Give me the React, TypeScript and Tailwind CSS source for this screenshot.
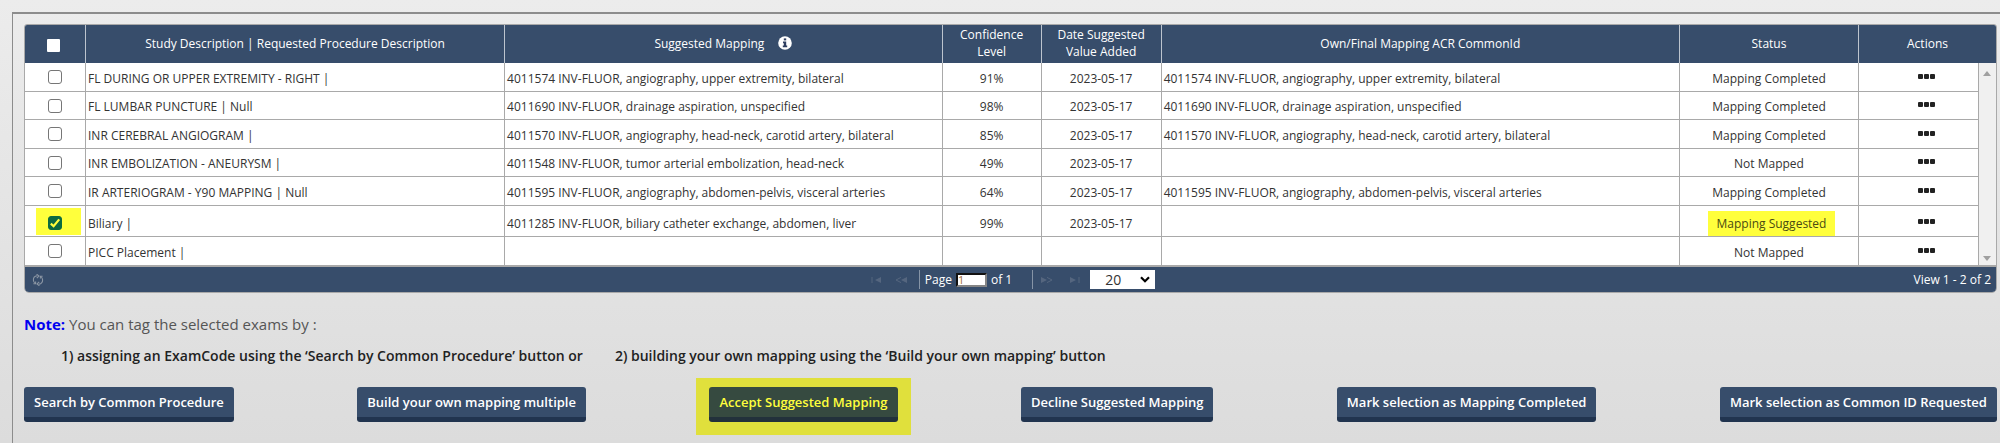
import React, { useState } from "react";

type Row = {
  study: string;
  suggested: string;
  confidence: string;
  date: string;
  final: string;
  status: string;
  highlighted?: boolean;
  height: string;
};

const ROWS: Row[] = [
  { study: "FL DURING OR UPPER EXTREMITY - RIGHT |", suggested: "4011574 INV-FLUOR, angiography, upper extremity, bilateral", confidence: "91%", date: "2023-05-17", final: "4011574 INV-FLUOR, angiography, upper extremity, bilateral", status: "Mapping Completed", height: "h-[29px]" },
  { study: "FL LUMBAR PUNCTURE | Null", suggested: "4011690 INV-FLUOR, drainage aspiration, unspecified", confidence: "98%", date: "2023-05-17", final: "4011690 INV-FLUOR, drainage aspiration, unspecified", status: "Mapping Completed", height: "h-[28px]" },
  { study: "INR CEREBRAL ANGIOGRAM |", suggested: "4011570 INV-FLUOR, angiography, head-neck, carotid artery, bilateral", confidence: "85%", date: "2023-05-17", final: "4011570 INV-FLUOR, angiography, head-neck, carotid artery, bilateral", status: "Mapping Completed", height: "h-[29px]" },
  { study: "INR EMBOLIZATION - ANEURYSM |", suggested: "4011548 INV-FLUOR, tumor arterial embolization, head-neck", confidence: "49%", date: "2023-05-17", final: "", status: "Not Mapped", height: "h-[28px]" },
  { study: "IR ARTERIOGRAM - Y90 MAPPING | Null", suggested: "4011595 INV-FLUOR, angiography, abdomen-pelvis, visceral arteries", confidence: "64%", date: "2023-05-17", final: "4011595 INV-FLUOR, angiography, abdomen-pelvis, visceral arteries", status: "Mapping Completed", height: "h-[29px]" },
  { study: "Biliary |", suggested: "4011285 INV-FLUOR, biliary catheter exchange, abdomen, liver", confidence: "99%", date: "2023-05-17", final: "", status: "Mapping Suggested", highlighted: true, height: "h-[31px]" },
  { study: "PICC Placement |", suggested: "", confidence: "", date: "", final: "", status: "Not Mapped", height: "h-[29px]" },
];

const ACTIONS = [
  "Search by Common Procedure",
  "Build your own mapping multiple",
  "Accept Suggested Mapping",
  "Decline Suggested Mapping",
  "Mark selection as Mapping Completed",
  "Mark selection as Common ID Requested",
];

function RowCheckbox({ label, checked, onChange }: { label: string; checked: boolean; onChange: () => void }) {
  return (
    <span className="relative block size-[14px]">
      <input
        type="checkbox"
        aria-label={label}
        checked={checked}
        onChange={onChange}
        className="block size-[14px] appearance-none rounded-[3px] border border-[#767676] bg-white checked:border-[#0b6b41] checked:bg-[#0b6b41]"
      />
      {checked && (
        <svg viewBox="0 0 14 14" className="pointer-events-none absolute inset-0 size-[14px]" fill="none" stroke="#ffff3c" strokeWidth="2.2">
          <path d="M2.8 7.6 5.6 10.2 11.2 3.4" />
        </svg>
      )}
    </span>
  );
}

function InfoIcon() {
  return (
    <svg viewBox="0 0 14 14" className="size-[14px]">
      <circle cx="7" cy="7" r="6.8" fill="#fff" />
      <rect x="5.8" y="2.4" width="2.4" height="2" fill="#2f3f60" />
      <path d="M5 5.6H8.2V9.6H9.2V11.2H4.8V9.6H5.8V7.2H5Z" fill="#2f3f60" />
    </svg>
  );
}

function RefreshIcon() {
  return (
    <svg viewBox="0 0 12 12" className="size-3" fill="none" stroke="#8a95a3" strokeWidth="1.1">
      <path d="M5 1.8C2.6 2.2 1.3 4 1.4 6.2 1.5 7.5 2.2 8.8 3.4 9.6M7 10.2C9.4 9.8 10.7 8 10.6 5.8 10.5 4.5 9.8 3.2 8.6 2.4" />
      <path d="M4.6 0.2 7 2 4.8 4.2M7.4 11.8 5 10 7.2 7.8" />
      <path d="M8.4 4.6V2.3H10.6M3.6 7.4V9.7H1.4" />
    </svg>
  );
}

function PagerIcon({ kind }: { kind: "first" | "prev" | "next" | "last" }) {
  const flip = kind === "next" || kind === "last";
  return (
    <svg viewBox="0 0 12 8" className={flip ? "h-2 w-3 rotate-180" : "h-2 w-3"}>
      {kind === "first" || kind === "last" ? (
        <path d="M1.5 1H2.5V7H1.5ZM11 1V7L5 4Z" fill="#55667f" />
      ) : (
        <>
          <path d="M12 1V7L6 4Z" fill="#55667f" />
          <path d="M6 1.4 1 4 6 6.6" fill="none" stroke="#55667f" />
        </>
      )}
    </svg>
  );
}

function PagerButton({ kind, label }: { kind: "first" | "prev" | "next" | "last"; label: string }) {
  return (
    <button type="button" aria-label={label} className="flex h-5 w-3 items-center justify-center">
      <PagerIcon kind={kind} />
    </button>
  );
}

export default function App() {
  const [selected, setSelected] = useState<boolean[]>(ROWS.map((r) => !!r.highlighted));
  const toggle = (i: number) => setSelected((s) => s.map((v, j) => (j === i ? !v : v)));
  const cell = "border-r border-b border-[#a9a9a9] p-0 align-middle";
  const head = "border-r border-[#bcc4ce] px-1 pt-0 pb-[2px] text-center align-middle font-medium";

  return (
    <div className="flex min-h-screen flex-col bg-linear-to-b from-[#ececec] to-[#dcdcdc] pt-[12px] pl-[12px] font-['Open_Sans',sans-serif] text-[#333]">
      <main className="flex-1 border-t-2 border-l border-[#8c8c8c] pt-[10px] pr-[3px] pl-[11px]">
        <section className="overflow-hidden rounded-t-[3px] rounded-b-[5px] border border-[#a9a9a9] bg-white">
          <table className="w-full table-fixed border-separate border-spacing-0 text-[12px] leading-[17px]">
            <colgroup>
              <col className="w-[61px]" />
              <col />
              <col className="w-[22.2%]" />
              <col className="w-[99px]" />
              <col className="w-[120px]" />
              <col className="w-[26.3%]" />
              <col className="w-[179px]" />
              <col className="w-[120px]" />
              <col className="w-[17px]" />
            </colgroup>
            <thead className="bg-[#374d6b] text-white">
              <tr className="h-[38px]">
                <th className={head}>
                  <input
                    type="checkbox"
                    aria-label="Select all"
                    className="mt-1 ml-[18px] block size-[13px] appearance-none rounded-[1px] bg-white checked:bg-[#0b6b41]"
                  />
                </th>
                <th className={head}>Study Description | Requested Procedure Description</th>
                <th className={head}>
                  <span className="flex items-center justify-center gap-[14px]">
                    Suggested Mapping <InfoIcon />
                  </span>
                </th>
                <th className={head}>Confidence<br />Level</th>
                <th className={head}>Date Suggested<br />Value Added</th>
                <th className={head}>Own/Final Mapping ACR CommonId</th>
                <th className={head}>Status</th>
                <th colSpan={2} className="px-0 pt-0 pb-[2px] text-center font-medium">Actions</th>
              </tr>
            </thead>
            <tbody>
              {ROWS.map((r, i) => {
                const text = cell + (r.highlighted ? " pt-1" : " pt-[2px]");
                return (
                  <tr key={r.study} className={r.height}>
                    <td className={cell}>
                      <span className={r.highlighted ? "ml-[11px] flex h-[27px] w-[45px] items-center bg-[#ffff3c] pt-[3px] pl-3" : "flex justify-center"}>
                        <RowCheckbox label={"Select " + r.study} checked={selected[i]} onChange={() => toggle(i)} />
                      </span>
                    </td>
                    <td className={text + " pl-[2px]"}>{r.study}</td>
                    <td className={text + " pl-[2px]"}>{r.suggested}</td>
                    <td className={text + " text-center"}>{r.confidence}</td>
                    <td className={text + " text-center"}>{r.date}</td>
                    <td className={text + " pl-[2px]"}>{r.final}</td>
                    <td className={text + " text-center"}>
                      {r.highlighted ? (
                        <span className="ml-[28px] block w-[127px] bg-[#ffff3c] py-1 text-[#4a4a12]">{r.status}</span>
                      ) : (
                        r.status
                      )}
                    </td>
                    <td className={text + " pl-4"}>
                      <button type="button" aria-label={"Actions for " + r.study} className="mx-auto flex h-4 items-center gap-px pb-1">
                        <span className="size-[5px] rounded-[1px] bg-[#222]" />
                        <span className="size-[5px] rounded-[1px] bg-[#222]" />
                        <span className="size-[5px] rounded-[1px] bg-[#222]" />
                      </button>
                    </td>
                    {i === 0 && (
                      <td rowSpan={ROWS.length} className="border-b border-[#a9a9a9] bg-[#f0f0f0] px-0 pt-1 pb-0">
                        <div className="flex h-[190px] flex-col items-center justify-between">
                          <svg viewBox="0 0 8 5" className="h-[5px] w-2"><path d="M0 5 4 0 8 5Z" fill="#a0a0a0" /></svg>
                          <svg viewBox="0 0 8 5" className="h-[5px] w-2"><path d="M0 0 4 5 8 0Z" fill="#a0a0a0" /></svg>
                        </div>
                      </td>
                    )}
                  </tr>
                );
              })}
            </tbody>
          </table>

          <footer className="grid grid-cols-[1fr_auto_1fr] items-center border-t border-[#a9a9a9] bg-[#374d6b] text-[12px] leading-[17px] font-medium text-white">
            <button type="button" aria-label="Refresh" className="ml-[7px] flex size-3 items-center">
              <RefreshIcon />
            </button>
            <div className="flex h-[25px] items-center pl-1">
              <PagerButton kind="first" label="First page" />
              <span className="w-[13px]" />
              <PagerButton kind="prev" label="Previous page" />
              <span className="ml-3 h-[19px] w-px bg-[#8694a6]" />
              <label className="ml-[5px] flex items-center gap-1">
                Page
                <input
                  defaultValue="1"
                  className="h-[14px] w-[31px] border-2 border-t-[#111] border-r-[#858585] border-b-[#858585] border-l-[#111] bg-white p-0 text-[11px] leading-[10px] font-normal text-[#a06a3a]"
                />
              </label>
              <span className="ml-1">of 1</span>
              <span className="ml-5 h-[19px] w-px bg-[#8694a6]" />
              <span className="w-2" />
              <PagerButton kind="next" label="Next page" />
              <span className="w-4" />
              <PagerButton kind="last" label="Last page" />
              <span className="relative ml-[9px] block">
                <select aria-label="Rows per page" defaultValue="20" className="block h-[19px] w-[65px] appearance-none bg-white pl-[15px] text-[14px] leading-[19px] font-normal text-[#333]">
                  <option>20</option>
                  <option>50</option>
                </select>
                <svg viewBox="0 0 10 7" className="pointer-events-none absolute top-[6px] right-[5px] h-[7px] w-[10px]" fill="none" stroke="#000" strokeWidth="2.2">
                  <path d="M1 1.2 5 5.2 9 1.2" />
                </svg>
              </span>
            </div>
            <span className="pr-[5px] text-right">View 1 - 2 of 2</span>
          </footer>
        </section>

        <p className="mt-[19px] text-[15px] leading-[24px] text-[#555]">
          <strong className="font-bold text-[#0000f0]">Note:</strong> You can tag the selected exams by :
        </p>
        <p className="mt-[9px] flex gap-8 pl-[37px] text-[14px] leading-[22px] font-semibold text-[#222]">
          <span>1) assigning an ExamCode using the ‘Search by Common Procedure’ button or</span>
          <span>2) building your own mapping using the ‘Build your own mapping’ button</span>
        </p>

        <div className="mt-[20px] flex items-start justify-between">
          {ACTIONS.map((a) => {
            const on = a === "Accept Suggested Mapping";
            const button = (
              <button
                key={a}
                type="button"
                className={
                  "h-[35px] rounded-[3px] border-b-[5px] px-[10px] text-[13px] leading-[20px] font-semibold whitespace-nowrap " +
                  (on ? "border-[#22313b] bg-[#364a40] text-[#ffff3c]" : "border-[#21344f] bg-[#374d6b] text-white")
                }
              >
                {a}
              </button>
            );
            return on ? (
              <div key={a} className="-mx-[13px] -mt-[9px] bg-[#e0e03c] px-[13px] pt-[9px] pb-[13px] leading-[0]">
                {button}
              </div>
            ) : (
              button
            );
          })}
        </div>
      </main>
    </div>
  );
}
